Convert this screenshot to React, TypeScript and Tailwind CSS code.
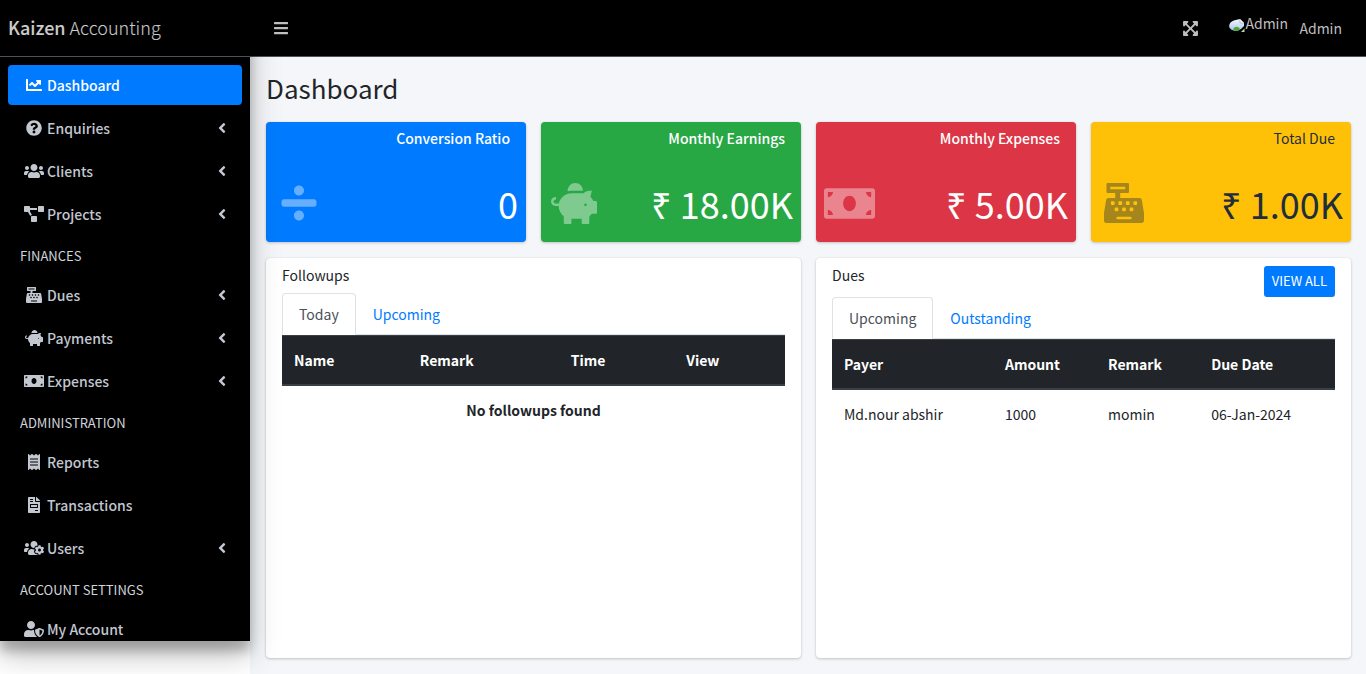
import React, { useState } from "react";
import {
  FaAngleLeft,
  FaBars,
  FaCashRegister,
  FaChartLine,
  FaDivide,
  FaExpandArrowsAlt,
  FaFileInvoice,
  FaMoneyBill,
  FaPiggyBank,
  FaProjectDiagram,
  FaQuestionCircle,
  FaReceipt,
  FaUserShield,
  FaUsers,
  FaUsersCog,
} from "react-icons/fa";
import type { IconType } from "react-icons";

type NavEntry =
  | { kind: "header"; label: string }
  | { kind: "link"; label: string; icon: IconType; size?: string; tree?: boolean; active?: boolean };

const WIDE = "h-4 w-5";

const NAV: NavEntry[] = [
  { kind: "link", label: "Dashboard", icon: FaChartLine, active: true },
  { kind: "link", label: "Enquiries", icon: FaQuestionCircle, tree: true },
  { kind: "link", label: "Clients", icon: FaUsers, size: WIDE, tree: true },
  { kind: "link", label: "Projects", icon: FaProjectDiagram, size: WIDE, tree: true },
  { kind: "header", label: "FINANCES" },
  { kind: "link", label: "Dues", icon: FaCashRegister, tree: true },
  { kind: "link", label: "Payments", icon: FaPiggyBank, size: "h-4 w-[18px]", tree: true },
  { kind: "link", label: "Expenses", icon: FaMoneyBill, size: WIDE, tree: true },
  { kind: "header", label: "ADMINISTRATION" },
  { kind: "link", label: "Reports", icon: FaReceipt },
  { kind: "link", label: "Transactions", icon: FaFileInvoice },
  { kind: "link", label: "Users", icon: FaUsersCog, size: WIDE, tree: true },
  { kind: "header", label: "ACCOUNT SETTINGS" },
  { kind: "link", label: "My Account", icon: FaUserShield, size: WIDE },
];

const STATS: { label: string; value: string; icon: IconType; size: string; box: string; tint: string }[] = [
  { label: "Conversion Ratio", value: "0", icon: FaDivide, size: "h-10 w-10", box: "bg-[#007bff] font-medium text-white", tint: "text-white/40" },
  { label: "Monthly Earnings", value: "₹ 18.00K", icon: FaPiggyBank, size: "h-[41px] w-[46px]", box: "bg-[#28a745] font-medium text-white", tint: "text-white/40" },
  { label: "Monthly Expenses", value: "₹ 5.00K", icon: FaMoneyBill, size: "h-[41px] w-[51px]", box: "bg-[#dc3545] font-medium text-white", tint: "text-white/40" },
  { label: "Total Due", value: "₹ 1.00K", icon: FaCashRegister, size: "h-10 w-10", box: "bg-[#ffc107] text-[#1f2d3d]", tint: "text-[#1f2d3d]/40" },
];

function Sidebar() {
  return (
    <aside className="relative z-10 flex h-[calc(100vh-33px)] w-[250px] shrink-0 flex-col overflow-hidden bg-black text-[#c2c7d0] shadow-[0_14px_28px_rgba(0,0,0,0.25),0_10px_10px_rgba(0,0,0,0.22)]">
      <a href="#home" className="flex h-[57px] shrink-0 items-center border-b border-[#4b545c] px-2 pb-[2px] text-lg font-light text-white/80">
        <span>
          <span className="font-medium">Kaizen</span> Accounting
        </span>
      </a>
      <nav className="flex flex-col px-2 pt-2">
        {NAV.map((entry) =>
          entry.kind === "header" ? (
            <div key={entry.label} className="flex h-[38px] shrink-0 items-center px-3 text-[13px] text-[#d0d4db]">
              {entry.label}
            </div>
          ) : (
            <a
              key={entry.label}
              href={"#" + entry.label.toLowerCase().replace(" ", "-")}
              className={
                entry.active
                  ? "mb-[3px] flex h-10 shrink-0 items-center rounded bg-[#007bff] pr-4 pl-[13px] font-medium text-white"
                  : "mb-[3px] flex h-10 shrink-0 items-center rounded pr-4 pl-[13px] font-medium hover:bg-white/10"
              }
            >
              <span className="flex w-[26px] justify-center">
                <entry.icon className={(entry.size ?? "h-4 w-4") + " shrink-0"} />
              </span>
              <span className="flex-1">{entry.label}</span>
              {entry.tree && <FaAngleLeft className="h-4 w-2" />}
            </a>
          ),
        )}
      </nav>
    </aside>
  );
}

function BrokenImage() {
  return (
    <span className="flex h-[34px] w-[60px] overflow-hidden rounded-full pt-[5px] leading-none">
      <svg viewBox="0 0 16 16" className="mt-[2px] size-4 shrink-0" aria-hidden="true">
        <defs>
          <linearGradient id="sky" x1="0" y1="0" x2="0" y2="1">
            <stop offset="0" stopColor="#f4f8ff" />
            <stop offset="1" stopColor="#a9c4ee" />
          </linearGradient>
        </defs>
        <path d="M0 7.500C0 4 5 2 11 1l4 3.500v3.500l-3 3-4 2C3 13 0 10.500 0 7.500z" fill="url(#sky)" />
        <path d="M11 1v4h4z" fill="#ffffff" stroke="#9aa0a8" strokeWidth="0.6" />
        <path d="M4 11.500c1.500-3.500 5-3.500 7-.5l-2 2H7z" fill="#4ca832" />
        <path d="M12 14l3.500-3.500V14z" fill="#b9dcae" />
      </svg>
      <span>Admin</span>
    </span>
  );
}

function TopBar() {
  return (
    <header className="flex h-[57px] shrink-0 items-center justify-between border-b border-[#4b545c] bg-black pr-6 pl-6 text-[#bfbfbf]">
      <button type="button" aria-label="Toggle menu">
        <FaBars className="h-4 w-[14px]" />
      </button>
      <div className="flex items-center">
        <button type="button" aria-label="Full screen" className="mr-[30px]">
          <FaExpandArrowsAlt className="h-[17px] w-[17px]" />
        </button>
        <a href="#profile" className="flex items-center gap-[10px]">
          <BrokenImage />
          <span>Admin</span>
        </a>
      </div>
    </header>
  );
}

function Tabs({ items }: { items: string[] }) {
  const [current, setCurrent] = useState(0);
  return (
    <div role="tablist" className="flex border-b border-[#dee2e6]">
      {items.map((item, i) => (
        <button
          key={item}
          type="button"
          role="tab"
          aria-selected={i === current}
          onClick={() => setCurrent(i)}
          className={
            i === current
              ? "-mb-px h-[42px] rounded-t border border-[#dee2e6] border-b-white bg-white px-4 text-[#495057]"
              : "-mb-px h-[42px] rounded-t border border-transparent px-4 text-[#007bff]"
          }
        >
          {item}
        </button>
      ))}
    </div>
  );
}

function HeadRow({ cells }: { cells: [string, string][] }) {
  return (
    <thead>
      <tr className="h-[49px] border-t border-b-2 border-t-[#383f45] border-b-[#383f45] bg-[#212529] text-left text-white">
        {cells.map(([label, width]) => (
          <th key={label} className={width + " px-3 font-bold"}>
            {label}
          </th>
        ))}
      </tr>
    </thead>
  );
}

const PANEL =
  "flex min-h-[400px] flex-col rounded bg-white px-4 pt-2 shadow-[0_0_1px_rgba(0,0,0,0.125),0_1px_3px_rgba(0,0,0,0.2)]";

export default function App() {
  return (
    <div className="flex min-h-screen bg-white font-['Noto_Sans_CJK_JP',sans-serif] text-[14px] leading-6 text-[#212529]">
      <Sidebar />
      <div className="flex min-w-0 flex-1 flex-col bg-[#f4f6f9]">
        <TopBar />
        <main className="flex flex-1 flex-col pt-[13px] pr-[15px] pl-4">
          <h1 className="text-[26px] leading-9">Dashboard</h1>
          <section className="mt-4 grid grid-cols-4 gap-[15px]">
            {STATS.map((s) => (
              <article
                key={s.label}
                className={
                  s.box + " flex h-[120px] flex-col justify-between rounded px-2 pt-1 shadow-[0_0_1px_rgba(0,0,0,0.125),0_1px_3px_rgba(0,0,0,0.2)]"
                }
              >
                <div className="px-2 text-right">{s.label}</div>
                <div className="flex items-center justify-between pb-[11px]">
                  <span className={s.tint + " flex w-[50px] justify-center"}>
                    <s.icon className={s.size + " shrink-0"} />
                  </span>
                  <span className="text-[36px] leading-[56px] font-normal">{s.value}</span>
                </div>
              </article>
            ))}
          </section>
          <section className="mt-4 grid grid-cols-2 gap-[15px] pb-4">
            <article className={PANEL}>
              <h2 className="mb-1 h-[23px] leading-[18px]">Followups</h2>
              <Tabs items={["Today", "Upcoming"]} />
              <table className="w-full">
                <HeadRow cells={[["Name", "w-1/4"], ["Remark", "w-[30%]"], ["Time", "w-[23%]"], ["View", "w-[22%]"]]} />
                <tbody>
                  <tr className="h-[49px]">
                    <td colSpan={4} className="px-3 text-center font-bold">
                      No followups found
                    </td>
                  </tr>
                </tbody>
              </table>
            </article>
            <article className={PANEL}>
              <div className="flex h-[31px] items-start justify-between">
                <h2 className="leading-[18px]">Dues</h2>
                <button type="button" className="h-[31px] rounded-[3px] bg-[#007bff] px-2 pb-px text-[13px] text-white">
                  VIEW ALL
                </button>
              </div>
              <Tabs items={["Upcoming", "Outstanding"]} />
              <table className="w-full table-fixed">
                <HeadRow cells={[["Payer", "w-[32%]"], ["Amount", "w-[20.5%]"], ["Remark", "w-[20.5%]"], ["Due Date", ""]]} />
                <tbody>
                  <tr className="h-[49px]">
                    <td className="px-3">Md.nour abshir</td>
                    <td className="px-3">1000</td>
                    <td className="px-3">momin</td>
                    <td className="px-3">06-Jan-2024</td>
                  </tr>
                </tbody>
              </table>
            </article>
          </section>
        </main>
      </div>
    </div>
  );
}
